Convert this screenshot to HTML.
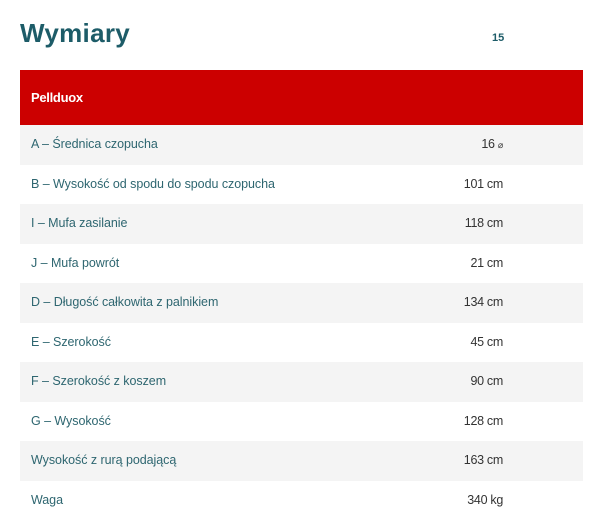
<!DOCTYPE html>
<html><head><meta charset="utf-8"><style>
body{margin:0;background:#fff;font-family:"Liberation Sans",sans-serif;width:606px;height:523px;overflow:hidden;position:relative}
h1{position:absolute;left:20px;top:18px;margin:0;font-size:26px;font-weight:bold;color:#1d5c68;letter-spacing:0.3px}
.n{position:absolute;left:492px;top:32px;font-size:11px;font-weight:bold;color:#1d5c68}
.hd{position:absolute;left:20px;top:70px;width:563px;height:55px;background:#cc0000;color:#fff;font-weight:bold;font-size:13px;line-height:55px;text-indent:11px;letter-spacing:-0.3px}
.r{position:absolute;left:20px;width:563px;height:39.5px;line-height:39.5px;font-size:12.5px}
.r.g{background:#f4f4f4}
.l{position:absolute;left:11px;color:#2e6670;letter-spacing:-0.05px}
.v{position:absolute;right:80px;color:#333;letter-spacing:-0.3px}
</style></head><body>
<h1>Wymiary</h1><div class="n">15</div>
<div class="hd">Pellduox</div>
<div class="r g" style="top:125px"><span class="l">A – Średnica czopucha</span><span class="v">16 <span style="font-size:9px">⌀</span></span></div>
<div class="r" style="top:164.5px"><span class="l">B – Wysokość od spodu do spodu czopucha</span><span class="v">101 cm</span></div>
<div class="r g" style="top:204px"><span class="l">I – Mufa zasilanie</span><span class="v">118 cm</span></div>
<div class="r" style="top:243.5px"><span class="l">J – Mufa powrót</span><span class="v">21 cm</span></div>
<div class="r g" style="top:283px"><span class="l">D – Długość całkowita z palnikiem</span><span class="v">134 cm</span></div>
<div class="r" style="top:322.5px"><span class="l">E – Szerokość</span><span class="v">45 cm</span></div>
<div class="r g" style="top:362px"><span class="l">F – Szerokość z koszem</span><span class="v">90 cm</span></div>
<div class="r" style="top:401.5px"><span class="l">G – Wysokość</span><span class="v">128 cm</span></div>
<div class="r g" style="top:441px"><span class="l">Wysokość z rurą podającą</span><span class="v">163 cm</span></div>
<div class="r" style="top:480.5px"><span class="l">Waga</span><span class="v">340 kg</span></div>
</body></html>
